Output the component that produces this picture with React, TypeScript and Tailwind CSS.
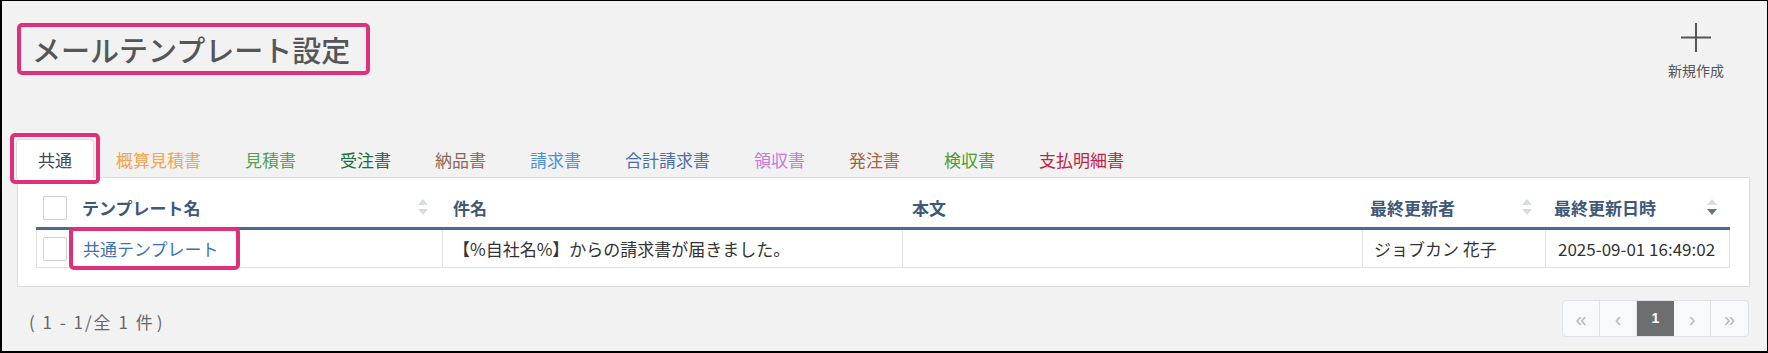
import React from 'react';

const tabs = [
  { label: '共通', color: 'text-[#3e4a57]', active: true },
  { label: '概算見積書', color: 'text-[#f5a34f]' },
  { label: '見積書', color: 'text-[#4fa24a]' },
  { label: '受注書', color: 'text-[#1f6b3a]' },
  { label: '納品書', color: 'text-[#8b6a52]' },
  { label: '請求書', color: 'text-[#4b8fdc]' },
  { label: '合計請求書', color: 'text-[#4c6ea3]' },
  { label: '領収書', color: 'text-[#c47ae0]' },
  { label: '発注書', color: 'text-[#a3653a]' },
  { label: '検収書', color: 'text-[#4f9a2c]' },
  { label: '支払明細書', color: 'text-[#c4223f]' },
];

function SortIcon({ active }: { active?: boolean }) {
  return (
    <svg width="10" height="19" viewBox="0 0 10 19" className="shrink-0">
      <polygon points="0,7 5,1 10,7" fill="#d6dce4" />
      <polygon points="0,11 5,17 10,11" fill={active ? '#5f7898' : '#d6dce4'} />
    </svg>
  );
}

function Checkbox() {
  return <div className="w-[24px] h-[24px] border border-[#d2d2d2] bg-white rounded-[2px]" />;
}

const cols = 'grid grid-cols-[34px_372px_460px_460px_183px_185px]';

export default function App() {
  return (
    <div className="w-[1768px] h-[353px] box-border bg-[#f2f2f2] border-black border-t border-r border-l-2 border-b-2 font-['Noto_Sans_CJK_JP','Noto_Sans',sans-serif] overflow-hidden">
      {/* header */}
      <div className="h-[74px] flex items-start justify-between">
        <div className="ml-[15px] mt-[22px] h-[52px] border-[4px] border-[#e0307a] rounded-[5px] pl-[11px] pr-[16px] flex items-center">
          <h1 className="text-[29px] leading-none font-medium text-[#555657]">メールテンプレート設定</h1>
        </div>
        <button className="mt-[22px] mr-[43px] flex flex-col items-center text-[#555]">
          <svg width="30" height="29" viewBox="0 0 30 29">
            <line x1="0" y1="14.5" x2="30" y2="14.5" stroke="#555" strokeWidth="2" />
            <line x1="15" y1="0" x2="15" y2="29" stroke="#555" strokeWidth="2" />
          </svg>
          <span className="mt-[9px] text-[14px] leading-[18px]">新規作成</span>
        </button>
      </div>

      {/* tabs */}
      <div className="mt-[64px] ml-[14px] flex items-end relative z-10">
        {tabs.map((t) => (
          <div
            key={t.label}
            className={
              t.active
                ? 'relative h-[39px] -mb-px px-[21px] flex items-center bg-white border border-b-0 border-[#dcdcdc] rounded-t-[4px]'
                : 'h-[39px] -mb-px px-[21px] flex items-center border border-b-0 border-transparent'
            }
          >
            <span className={`text-[17px] leading-none ${t.color}`}>{t.label}</span>
            {t.active && (
              <span className="absolute -left-[7px] -top-[7px] -right-[7px] -bottom-[6px] border-[4px] border-[#e0307a] rounded-[5px]" />
            )}
          </div>
        ))}
      </div>

      {/* panel */}
      <div className="ml-[15px] w-[1733px] bg-white border border-[#dcdcdc] pt-[10px] px-[18px] pb-[18px]">
        <div className={`${cols} w-[1694px] h-[42px] border-b-[3px] border-[#4c6a8c] text-[17px] font-bold text-[#3d5879]`}>
          <div className="flex items-center pl-[7px]">
            <Checkbox />
          </div>
          <div className="flex items-center justify-between pl-[12px] pr-[14px]">
            <span>テンプレート名</span>
            <SortIcon />
          </div>
          <div className="flex items-center pl-[11px]">件名</div>
          <div className="flex items-center pl-[10px]">本文</div>
          <div className="flex items-center justify-between pl-[8px] pr-[13px]">
            <span>最終更新者</span>
            <SortIcon />
          </div>
          <div className="flex items-center justify-between pl-[9px] pr-[13px]">
            <span>最終更新日時</span>
            <SortIcon active />
          </div>
        </div>
        <div className={`${cols} w-[1694px] h-[38px] border-x border-b border-[#e2e2e2] text-[17px] text-[#333]`}>
          <div className="flex items-center pl-[6px] border-r border-[#e2e2e2]">
            <Checkbox />
          </div>
          <div className="relative flex items-center pl-[12px] border-r border-[#e2e2e2]">
            <a className="text-[#3a72b4]">共通テンプレート</a>
            <span className="absolute left-[-2px] top-[-3px] w-[171px] h-[43px] border-[4px] border-[#e0307a] rounded-[5px]" />
          </div>
          <div className="flex items-center pl-[10px] border-r border-[#e2e2e2]">【%自社名%】からの請求書が届きました。</div>
          <div className="border-r border-[#e2e2e2]" />
          <div className="flex items-center pl-[11px] border-r border-[#e2e2e2]">ジョブカン 花子</div>
          <div className="flex items-center pl-[12px]">2025-09-01 16:49:02</div>
        </div>
      </div>

      {/* footer */}
      <div className="mt-[13px] flex items-center justify-between">
        <span className="ml-[27px] mt-[6px] text-[17px] tracking-[2px] text-[#666]">
          ( 1 - 1/全 1 件<span className="ml-[2px]">)</span>
        </span>
        <div className="mr-[18px] flex h-[37px] border border-[#dee2e6] rounded-[4px] overflow-hidden bg-[#f8f9fa] text-[#b5b8bb] font-['Liberation_Sans',sans-serif]">
          <div className="w-[37px] flex items-center justify-center border-r border-[#dee2e6] text-[20px]">«</div>
          <div className="w-[37px] flex items-center justify-center border-r border-[#dee2e6] text-[20px]">‹</div>
          <div className="w-[37px] flex items-center justify-center bg-[#6c6e70] text-white text-[14px] font-bold">1</div>
          <div className="w-[37px] flex items-center justify-center border-r border-[#dee2e6] text-[20px]">›</div>
          <div className="w-[37px] flex items-center justify-center text-[20px]">»</div>
        </div>
      </div>
    </div>
  );
}
